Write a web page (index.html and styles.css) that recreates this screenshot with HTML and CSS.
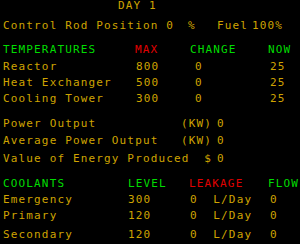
FILE: index.html
```html
<!DOCTYPE html>
<html lang="en">
<head>
    <meta charset="UTF-8">
    <title>Reactor Status</title>
    <link rel="stylesheet" href="styles.css">
</head>
<body>
    <div class="screen">
        <div class="day">DAY 1</div>

        <div class="row control">
            <span class="ctl-label">Control Rod Position 0</span>
            <span class="ctl-pct">%</span>
            <span class="ctl-fuel">Fuel</span>
            <span class="ctl-num">100%</span>
        </div>

        <!-- Temperatures -->
        <div class="row temps head">
            <span class="green">TEMPERATURES</span>
            <span class="red">MAX</span>
            <span class="green">CHANGE</span>
            <span class="green">NOW</span>
        </div>
        <div class="row temps">
            <span>Reactor</span>
            <span class="n-max">800</span>
            <span class="n-change">0</span>
            <span class="n-now">25</span>
        </div>
        <div class="row temps">
            <span>Heat Exchanger</span>
            <span class="n-max">500</span>
            <span class="n-change">0</span>
            <span class="n-now">25</span>
        </div>
        <div class="row temps">
            <span>Cooling Tower</span>
            <span class="n-max">300</span>
            <span class="n-change">0</span>
            <span class="n-now">25</span>
        </div>

        <!-- Power -->
        <div class="row power first">
            <span>Power Output</span>
            <span class="unit">(KW)</span>
            <span>0</span>
        </div>
        <div class="row power">
            <span>Average Power Output</span>
            <span class="unit">(KW)</span>
            <span>0</span>
        </div>
        <div class="row power value">
            <span>Value of Energy Produced</span>
            <span class="unit dollar">$</span>
            <span>0</span>
        </div>

        <!-- Coolants -->
        <div class="row cool head">
            <span class="green">COOLANTS</span>
            <span class="green">LEVEL</span>
            <span class="red">LEAKAGE</span>
            <span class="green">FLOW</span>
        </div>
        <div class="row cool emergency">
            <span>Emergency</span>
            <span>300</span>
            <span class="leak">0  L/Day</span>
            <span class="n-now">0</span>
        </div>
        <div class="row cool">
            <span>Primary</span>
            <span>120</span>
            <span class="leak">0  L/Day</span>
            <span class="n-now">0</span>
        </div>
        <div class="row cool secondary">
            <span>Secondary</span>
            <span>120</span>
            <span class="leak">0  L/Day</span>
            <span class="n-now">0</span>
        </div>
    </div>
</body>
</html>
```

FILE: styles.css
```css
html, body {
    margin: 0;
    padding: 0;
    background: #000;
}

.screen {
    width: 300px;
    height: 244px;
    padding: 0 0 0 3px;
    box-sizing: border-box;
    font-family: "DejaVu Sans Mono", "Liberation Mono", monospace;
    font-size: 11px;
    line-height: 16px;
    letter-spacing: 1.15px;
    color: #cfa400;
    overflow: hidden;
}

.day {
    padding-left: 115px;
    margin-top: -2px;
}

.row {
    display: flex;
    white-space: nowrap;
}

.row span {
    flex: none;
    min-width: 0;
    box-sizing: border-box;
}

.green {
    color: #00dc00;
}

.red {
    color: #e00000;
}

/* control rod line */
.control {
    margin-top: 4px;
}

.ctl-label {
    width: 185px;
}

.ctl-pct {
    width: 29px;
}

.ctl-fuel {
    width: 35px;
}

/* temperatures table */
.temps span:nth-child(1) {
    width: 132px;
}

.temps span:nth-child(2) {
    width: 55px;
}

.temps span:nth-child(3) {
    width: 78px;
}

.temps.head {
    margin-top: 8px;
    margin-bottom: 1px;
}

.n-max {
    padding-left: 1px;
}

.n-change {
    padding-left: 5px;
}

.n-now {
    padding-left: 2px;
}

/* power section */
.power {
    margin-top: 1px;
}

.power.first {
    margin-top: 9px;
}

.power.value {
    margin-top: 2px;
}

.power span:nth-child(1) {
    width: 178px;
}

.power span:nth-child(2) {
    width: 36px;
}

.dollar {
    text-align: right;
    padding-right: 5px;
}

/* coolants table */
.cool span:nth-child(1) {
    width: 125px;
}

.cool span:nth-child(2) {
    width: 61px;
}

.cool span:nth-child(3) {
    width: 79px;
}

.cool.head {
    margin-top: 9px;
}

.cool.emergency {
    margin-top: 0;
}

.cool.secondary {
    margin-top: 3px;
}

.leak {
    white-space: pre;
    padding-left: 1px;
}
```
